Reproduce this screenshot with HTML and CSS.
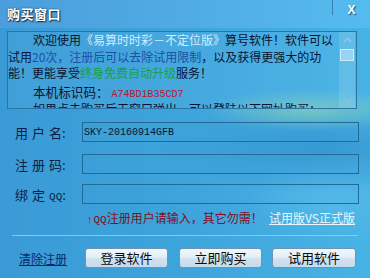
FILE: index.html
```html
<!DOCTYPE html>
<html lang="zh-CN">
<head>
<meta charset="utf-8">
<title>购买窗口</title>
<link rel="stylesheet" href="styles.css">
</head>
<body>
<div class="window">
  <div class="titlebar">
    <span class="title">购买窗口</span>
    <span class="title-sep"></span>
    <span class="close">X</span>
  </div>
  <div class="body">
    <div class="notice">
      <div class="notice-text">
        <div class="line indent">欢迎使用<span class="lt">《易算时时彩－不定位版》</span>算号软件！软件可以</div>
        <div class="line">试用<span class="bl">20次，注册后可以去除试用限制</span>，以及获得更强大的功</div>
        <div class="line">能！更能享受<span class="gr">终身免费自动升级</span>服务！</div>
        <div class="line indent code-line">本机标识码：<span class="code">A74BD1B35CD7</span></div>
        <div class="line indent">如果点击购买后无窗口弹出，可以登陆以下网址购买：</div>
      </div>
      <div class="scrollbar">
        <div class="sb-btn sb-up"><svg width="9" height="6" viewBox="0 0 9 6"><path d="M1 5 L4.5 1.5 L8 5" fill="none" stroke="#9fc6dd" stroke-width="1.3"/></svg></div>
        <div class="sb-thumb"></div>
        <div class="sb-track"></div>
        <div class="sb-btn sb-down"><svg width="9" height="6" viewBox="0 0 9 6"><path d="M1 1 L4.5 4.5 L8 1" fill="none" stroke="#9fc6dd" stroke-width="1.3"/></svg></div>
      </div>
    </div>

    <div class="form">
      <div class="row r1">
        <label class="lbl"><span class="c">用</span><span class="c">户</span>名:</label>
        <div class="input"><span class="val">SKY-20160914GFB</span></div>
      </div>
      <div class="row r2">
        <label class="lbl"><span class="c">注</span><span class="c">册</span>码:</label>
        <div class="input"></div>
      </div>
      <div class="row r3">
        <label class="lbl"><span class="c">绑</span><span class="c">定</span><span class="qq">QQ</span>:</label>
        <div class="input"></div>
      </div>
      <div class="hint-row">
        <span class="hint"><span class="arrow">↑</span><span class="qq2">QQ</span>注册用户请输入，其它勿需！</span>
        <a class="compare">试用版VS正式版</a>
      </div>
    </div>

    <div class="divider"></div>

    <div class="actions">
      <a class="clear">清除注册</a>
      <button class="btn b1">登录软件</button>
      <button class="btn b2">立即购买</button>
      <button class="btn b3">试用软件</button>
    </div>
  </div>
</div>
</body>
</html>
```
FILE: styles.css
```css
* { box-sizing: border-box; }
html, body { margin: 0; padding: 0; }
body {
  width: 370px;
  height: 278px;
  overflow: hidden;
  font-family: "Noto Sans CJK SC", "Noto Sans", sans-serif;
  color: #0c1c3c;
}
.window {
  width: 370px;
  height: 278px;
  position: relative;
  background:
    radial-gradient(ellipse 150px 30px at 310px 110px, rgba(160, 220, 170, 0.55), rgba(160, 220, 170, 0) 70%),
    radial-gradient(ellipse 240px 60px at 330px 148px, rgba(30, 110, 180, 0.35), rgba(30, 110, 180, 0) 75%),
    radial-gradient(ellipse 110px 60px at 330px 200px, rgba(110, 200, 240, 0.35), rgba(110, 200, 240, 0) 75%),
    linear-gradient(90deg, #3a9ad5 0%, #3da3db 45%, #47b3e5 100%);
}
.titlebar {
  height: 28px;
  display: flex;
  align-items: flex-start;
  background: linear-gradient(90deg, #4b9edb 0%, #50abe4 50%, #55bcef 100%);
}
.title {
  margin: 5px 0 0 7px;
  font-size: 13px;
  font-weight: bold;
  line-height: 18px;
  color: #fff;
  letter-spacing: 0.5px;
  text-shadow: 1px 1px 1px #10304e, 0 0 2px #1a4060;
}
.title-sep {
  margin-left: auto;
  width: 1px;
  height: 15px;
  background: #3a7fb4;
}
.close {
  width: 37px;
  text-align: center;
  margin-top: 2px;
  font-family: "Liberation Sans", sans-serif;
  font-size: 12px;
  font-weight: bold;
  line-height: 16px;
  color: #fff;
  text-shadow: 1px 1px 1px #1e4a70;
}
.body {
  padding: 3px 0 0 7px;
}
.notice {
  width: 350px;
  height: 78px;
  border: 1px solid #2c74a6;
  display: flex;
  background: rgba(120, 200, 240, 0.12);
  overflow: hidden;
}
.notice-text {
  flex: 1;
  font-size: 12px;
  color: #0a1430;
  overflow: hidden;
}
.line {
  height: 16.7px;
  line-height: 16.7px;
  white-space: nowrap;
}
.indent { padding-left: 25px; }
.code-line {
  margin-top: 2px;
  font-size: 12.6px;
}
.lt { color: #d6ecff; }
.bl { color: #1c4fa8; }
.gr { color: #17a050; }
.code {
  color: #c0142c;
  font-family: "Liberation Mono", monospace;
  font-size: 10px;
  margin-left: 3px;
}
.scrollbar {
  width: 16px;
  margin-right: 1px;
  display: flex;
  flex-direction: column;
  background: rgba(200, 235, 250, 0.18);
}
.sb-btn {
  height: 15px;
  display: flex;
  align-items: center;
  justify-content: center;
}
.sb-thumb {
  height: 12px;
  margin: 2px 1px 0 1px;
  border: 1px solid rgba(225, 245, 255, 0.7);
  background: rgba(220, 242, 255, 0.45);
}
.sb-track { flex: 1; }
.sb-down { opacity: 0.5; }
.form {
  display: flex;
  flex-direction: column;
}
.row {
  display: flex;
  align-items: center;
  height: 20px;
}
.r1 { margin-top: 13px; }
.r2 { margin-top: 12px; }
.r3 { margin-top: 10px; }
.lbl {
  width: 75px;
  padding-left: 8px;
  font-size: 13px;
  color: #0e1e44;
  white-space: nowrap;
}
.c { margin-right: 4px; }
.qq {
  font-family: "Liberation Mono", monospace;
  font-size: 11px;
}
.input {
  width: 277px;
  height: 20px;
  border: 1px solid #236a99;
  display: flex;
  align-items: center;
  padding-left: 1px;
}
.val {
  font-family: "Liberation Mono", monospace;
  font-size: 10px;
  color: #0a1430;
}
.hint-row {
  display: flex;
  align-items: center;
  width: 348px;
  margin-top: 5px;
  height: 16px;
  font-size: 12px;
}
.hint {
  margin-left: 80px;
  color: #7e0f1e;
  white-space: nowrap;
}
.arrow {
  font-family: "Liberation Sans", sans-serif;
  font-size: 11px;
  font-weight: bold;
  color: #c01020;
  margin-right: 1px;
}
.qq2 {
  font-family: "Liberation Mono", monospace;
  font-size: 11px;
}
.compare {
  margin-left: auto;
  color: #eaf7ff;
  text-decoration: underline;
  white-space: nowrap;
}
.divider {
  margin: 10px 0 0 5px;
  width: 346px;
  height: 1px;
  background: rgba(140, 210, 245, 0.85);
}
.actions {
  display: flex;
  align-items: center;
  margin-top: 12px;
  height: 20px;
}
.clear {
  margin-left: 12px;
  width: 66px;
  font-size: 12px;
  color: #0b2a66;
  text-decoration: underline;
}
.btn {
  height: 20px;
  width: 83px;
  padding: 0;
  border: 1px solid #6f93b2;
  border-radius: 3px;
  background: linear-gradient(#f2f8fc 0%, #e2eef7 45%, #cfe1ef 55%, #c6dbeb 100%);
  font-family: "Noto Sans CJK SC", sans-serif;
  font-size: 13px;
  line-height: 18px;
  color: #0a0a0a;
}
.b2 { margin-left: 11px; }
.b3 { margin-left: 10px; width: 84px; }
```
